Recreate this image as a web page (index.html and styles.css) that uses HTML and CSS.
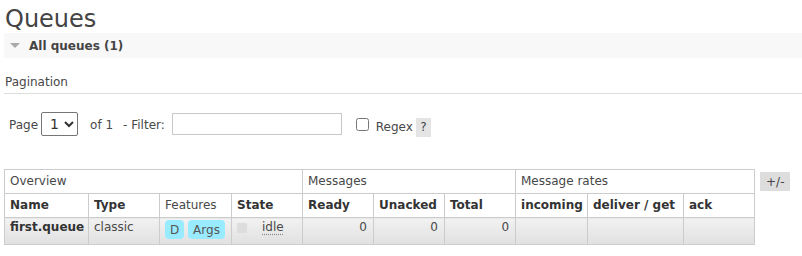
FILE: index.html
```html
<!DOCTYPE html>
<html>
<head>
<meta charset="utf-8">
<link rel="stylesheet" href="styles.css">
</head>
<body>
<h1 class="title">Queues</h1>
<div class="section-bar"><span class="tri"></span><span class="section-label">All queues (1)</span></div>
<h3 class="sub">Pagination</h3>
<div class="pager">
  <span class="lbl">Page</span>
  <select class="page-select"><option>1</option></select>
  <span class="of">of 1</span>
  <span class="flt">- Filter:</span>
  <input class="filter" type="text">
  <input class="regex-box" type="checkbox">
  <span class="regex">Regex</span>
  <span class="help">?</span>
</div>
<div class="table-wrap">
  <table class="list">
    <colgroup>
      <col class="c-name"><col class="c-71"><col class="c-72"><col class="c-71"><col class="c-71"><col class="c-71"><col class="c-71"><col class="c-72"><col class="c-96"><col class="c-71">
    </colgroup>
    <thead>
      <tr class="grp">
        <th colspan="4">Overview</th>
        <th colspan="3">Messages</th>
        <th colspan="3">Message rates</th>
      </tr>
      <tr class="cols">
        <th>Name</th><th>Type</th><th class="normal">Features</th><th>State</th>
        <th>Ready</th><th>Unacked</th><th>Total</th>
        <th>incoming</th><th>deliver / get</th><th>ack</th>
      </tr>
    </thead>
    <tbody>
      <tr class="row">
        <td class="name">first.queue</td>
        <td>classic</td>
        <td><span class="badge">D</span> <span class="badge">Args</span></td>
        <td><span class="sq"></span><span class="idle">idle</span></td>
        <td class="num">0</td>
        <td class="num">0</td>
        <td class="num">0</td>
        <td></td><td></td><td></td>
      </tr>
    </tbody>
  </table>
  <span class="toggle">+/-</span>
</div>
</body>
</html>
```
FILE: styles.css
```css
html, body {
  margin: 0;
  padding: 0;
}
body {
  padding: 5px 0 0 4px;
  font-family: "DejaVu Sans", Verdana, sans-serif;
  font-size: 12px;
  color: #484848;
  background: #fff;
}
.title {
  margin: 0;
  font-size: 24px;
  font-weight: normal;
  line-height: 28px;
  height: 28px;
  padding-left: 1px;
  color: #444;
}
.section-bar {
  height: 25px;
  background: #f8f8f8;
  display: flex;
  align-items: center;
  line-height: 14px;
}
.tri {
  width: 0;
  height: 0;
  border-left: 5px solid transparent;
  border-right: 5px solid transparent;
  border-top: 5px solid #aaa;
  margin: 0 9px 0 6px;
}
.section-label {
  font-weight: bold;
  color: #444;
  padding-top: 1px;
}
.sub {
  margin: 17px 0 0 0;
  padding: 0 0 4px 1px;
  font-size: 12px;
  font-weight: normal;
  line-height: 14px;
  border-bottom: 1px solid #ddd;
  color: #484848;
}
.pager {
  margin-top: 18px;
  height: 24px;
  display: flex;
  align-items: center;
  padding-left: 5px;
  line-height: 14px;
}
.lbl { margin-top: 2px; }
.page-select {
  margin: 0 0 0 3px;
  width: 37px;
  height: 24px;
  font-family: "DejaVu Sans", sans-serif;
  font-size: 14px;
  color: #333;
  padding: 0 0 0 4px;
  border: 1px solid #767676;
  border-radius: 2px;
  background: #fff;
}
.of { margin-left: 12px; margin-top: 1px; }
.flt { margin-left: 10px; margin-top: 1px; }
.filter {
  margin: 0 0 0 7px;
  width: 170px;
  height: 22px;
  box-sizing: border-box;
  border: 1px solid #c8c8c8;
  padding: 0 3px;
}
.regex-box {
  margin: 1px 0 0 14px;
  width: 13px;
  height: 13px;
}
.regex { margin-left: 7px; margin-top: 5px; }
.help {
  margin: 7px 0 0 3px;
  width: 15px;
  height: 19px;
  line-height: 19px;
  text-align: center;
  background: #e4e4e4;
  color: #444;
}
.table-wrap {
  margin-top: 33px;
  display: flex;
  align-items: flex-start;
}
.list {
  border-collapse: collapse;
  table-layout: fixed;
  width: 750px;
}
.c-name { width: 84px; }
.c-71 { width: 71px; }
.c-72 { width: 72px; }
.c-96 { width: 96px; }
.list th, .list td {
  border: 1px solid #ccc;
  padding: 4px 5px 5px;
  line-height: 14px;
  text-align: left;
  white-space: nowrap;
  overflow: hidden;
}
.grp th {
  font-weight: normal;
  color: #484848;
}
.cols th {
  font-weight: bold;
  color: #333;
}
.cols th.normal {
  font-weight: normal;
  color: #484848;
}
.row td {
  vertical-align: top;
  padding: 2px 5px 5px;
  background: linear-gradient(#f2f2f2, #e0e0e0);
}
.row td.name {
  font-weight: bold;
  color: #333;
}
.row td.num {
  text-align: right;
  padding-right: 6px;
}
.badge {
  display: inline-block;
  vertical-align: top;
  padding: 3px 5px 2px;
  line-height: 14px;
  background: #99ebff;
  border-radius: 4px;
  color: #555;
}
.sq {
  display: inline-block;
  vertical-align: top;
  width: 10px;
  height: 10px;
  margin: 3px 15px 0 0;
  background: #ddd;
}
.idle {
  text-decoration: underline dotted #888;
  text-underline-offset: 3px;
}
.toggle {
  margin: 3px 0 0 5px;
  background: #ddd;
  padding: 3px 6px 2px;
  line-height: 14px;
  color: #444;
}
```
